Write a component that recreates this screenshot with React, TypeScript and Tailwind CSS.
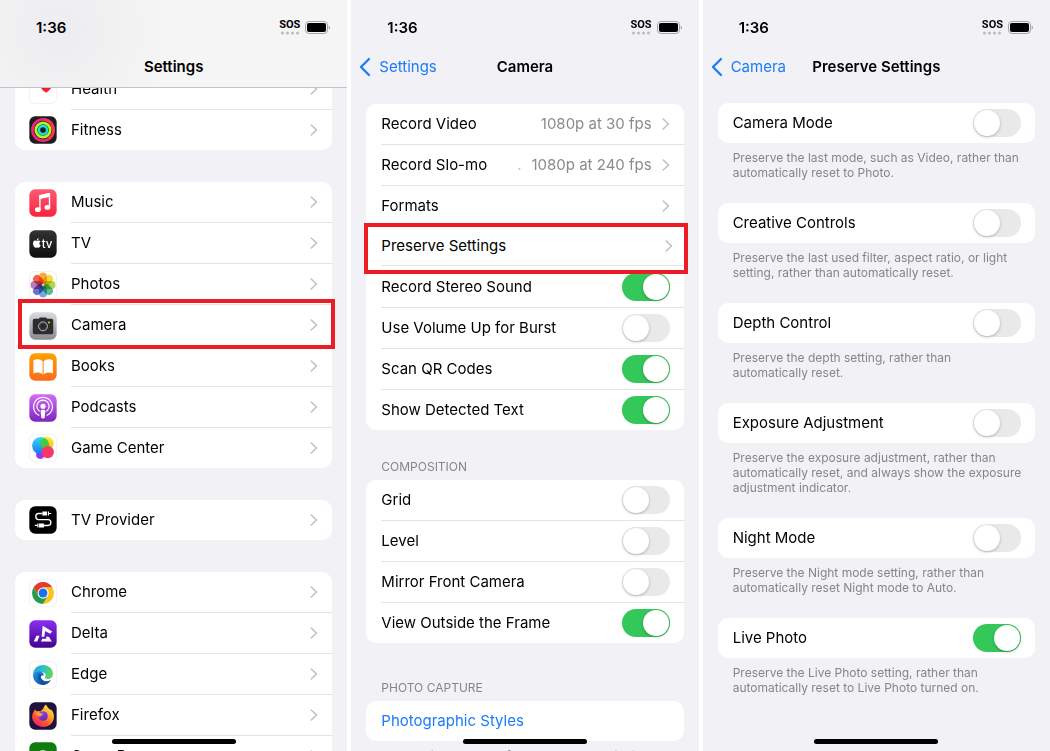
import { useId, type ReactNode } from "react";

/* ---------- app icons ---------- */

function Tile({ children, fill, outlined }: { children?: ReactNode; fill: string; outlined?: boolean }) {
  return (
    <svg viewBox="0 0 82 82" className="size-7 shrink-0" aria-hidden="true">
      <defs>
        <linearGradient id="g-music" x1="0" y1="0" x2="0" y2="1"><stop offset="0" stopColor="#fb5c74" /><stop offset="1" stopColor="#fa233b" /></linearGradient>
        <linearGradient id="g-tv" x1="0" y1="0" x2="0" y2="1"><stop offset="0" stopColor="#333333" /><stop offset="1" stopColor="#0f0f0f" /></linearGradient>
        <linearGradient id="g-camera" x1="0" y1="0" x2="0" y2="1"><stop offset="0" stopColor="#dcdbe0" /><stop offset="1" stopColor="#8b8a90" /></linearGradient>
        <linearGradient id="g-books" x1="0" y1="0" x2="0" y2="1"><stop offset="0" stopColor="#ffa000" /><stop offset="1" stopColor="#fb6a1e" /></linearGradient>
        <linearGradient id="g-podcasts" x1="0" y1="0" x2="0" y2="1"><stop offset="0" stopColor="#d36cf5" /><stop offset="1" stopColor="#7d27bd" /></linearGradient>
        <linearGradient id="g-delta" x1="0" y1="0" x2="0" y2="1"><stop offset="0" stopColor="#8b2cf5" /><stop offset="1" stopColor="#42078a" /></linearGradient>
      </defs>
      <rect x="1" y="1" width="80" height="80" rx="17" fill={fill} stroke={outlined ? "#e9e9eb" : "none"} strokeWidth="2" />
      {children}
    </svg>
  );
}

function HealthIcon() {
  return (
    <Tile fill="#fff" outlined>
      <path d="M50 49C40 42 33 35 33 27c0-10 13-13 17-4 4-9 17-6 17 4 0 8-7 15-17 22z" fill="#fb1d2e" />
    </Tile>
  );
}

function FitnessIcon() {
  return (
    <Tile fill="#1d1d1f">
      <circle cx="41" cy="41" r="31" fill="none" stroke="#f0227a" strokeWidth="8" />
      <path d="M46 10.400a31 31 0 0 1 12 56" fill="none" stroke="#f8384a" strokeWidth="8" />
      <circle cx="41" cy="41" r="21" fill="none" stroke="#b5f51c" strokeWidth="8" />
      <circle cx="41" cy="41" r="12" fill="none" stroke="#19e0e3" strokeWidth="7.500" />
    </Tile>
  );
}

function MusicIcon() {
  return (
    <Tile fill="url(#g-music)">
      <path d="M32 20l28-6v38" fill="none" stroke="#fff" strokeWidth="4" strokeLinejoin="round" />
      <path d="M30 19.500Q30 18 32 17.500L58 12q3-.5 3 2v9L30 30z" fill="#fff" />
      <path d="M32 20v40" stroke="#fff" strokeWidth="4" />
      <ellipse cx="26" cy="60.500" rx="8.500" ry="7" fill="#fff" />
      <ellipse cx="54" cy="54" rx="8.500" ry="7" fill="#fff" />
    </Tile>
  );
}

function TvIcon() {
  return (
    <Tile fill="url(#g-tv)">
      <path transform="translate(11 26) scale(1.04)" fill="#fff" d="M18.700 12.700c0-3.400 2.800-5 2.900-5.100-1.600-2.300-4-2.600-4.900-2.700-2.100-.2-4.100 1.200-5.100 1.200-1.100 0-2.700-1.200-4.400-1.200-2.300 0-4.400 1.300-5.500 3.400-2.400 4.100-.6 10.100 1.700 13.400 1.100 1.600 2.400 3.400 4.200 3.400 1.700-.1 2.300-1.100 4.400-1.100s2.600 1.100 4.400 1.100 3-1.600 4.100-3.300c1.300-1.900 1.800-3.700 1.800-3.800-.1 0-3.600-1.400-3.600-5.300zM15.300 2.700c.9-1.100 1.600-2.700 1.400-4.300-1.400.1-3 .9-4 2.100-.9 1-1.700 2.600-1.400 4.200 1.500.1 3.100-.8 4-2z" />
      <text x="37" y="53" fontSize="34" fontWeight="500" fontFamily="Inter, sans-serif" fill="#fff">tv</text>
    </Tile>
  );
}

const PETALS = ["#f9a02c", "#f2d81f", "#a9cf3c", "#4db77e", "#5aa5dd", "#5c63c0", "#b56bb5", "#f0523f"];

function PhotosIcon() {
  return (
    <Tile fill="#fff" outlined>
      {PETALS.map((color, i) => (
        <rect key={color} x="29.500" y="4.500" width="23" height="34" rx="11.500" fill={color} opacity="0.9" transform={`rotate(${i * 45} 41 41)`} className="mix-blend-multiply" />
      ))}
    </Tile>
  );
}

function CameraIcon() {
  return (
    <Tile fill="url(#g-camera)">
      <path d="M16 20h13l3-4h18l3 4h13q5 0 5 5v35q0 5-5 5H16q-5 0-5-5V25q0-5 5-5z" fill="#2d2d2f" />
      <circle cx="41" cy="42" r="13" fill="#27272a" stroke="#d4d4d8" strokeWidth="2.500" />
      <circle cx="41" cy="42" r="9" fill="none" stroke="#55555a" strokeWidth="1.500" />
      <circle cx="58.500" cy="31" r="3" fill="#f5c518" />
    </Tile>
  );
}

function BooksIcon() {
  return (
    <Tile fill="url(#g-books)">
      <path d="M40 24C34 17 20 16 13 22v38c8-4 20-4 27 3zM43 24c6-7 20-8 27-2v38c-8-4-20-4-27 3z" fill="#fff" />
      <path d="M41.500 25v35" stroke="#f9c191" strokeWidth="1.500" />
    </Tile>
  );
}

function PodcastsIcon() {
  return (
    <Tile fill="url(#g-podcasts)">
      <g fill="none" stroke="#fff" strokeWidth="3.500" strokeLinecap="round">
        <path d="M29 62a27.500 27.500 0 1 1 24 0" />
        <path d="M30 50a18 18 0 1 1 22 0" />
      </g>
      <circle cx="41" cy="36" r="7.500" fill="#fff" />
      <path d="M34 50q0-4 7-4t7 4l-2 18q-1 4-5 4t-5-4z" fill="#fff" />
    </Tile>
  );
}

function GameCenterIcon() {
  const id = useId();
  return (
    <Tile fill="#fff" outlined>
      <defs>
        <linearGradient id={`${id}a`} x1="0" y1="0" x2="0" y2="1"><stop offset="0" stopColor="#2fdcf5" /><stop offset="1" stopColor="#2272f2" /></linearGradient>
        <linearGradient id={`${id}b`} x1="0" y1="0" x2="0" y2="1"><stop offset="0" stopColor="#fff02a" /><stop offset="1" stopColor="#f7b718" /></linearGradient>
        <clipPath id={`${id}c`}><circle cx="34" cy="34" r="25" /></clipPath>
      </defs>
      <circle cx="33" cy="61" r="12" fill="#9438f2" />
      <circle cx="53" cy="27" r="19" fill={`url(#${id}b)`} />
      <circle cx="34" cy="34" r="25" fill={`url(#${id}a)`} />
      <circle cx="53" cy="27" r="19" fill="#3ecf3a" clipPath={`url(#${id}c)`} />
      <circle cx="55" cy="53" r="18" fill="#fb3668" />
    </Tile>
  );
}

function ProviderIcon() {
  return (
    <Tile fill="#000">
      <path d="M38 22H28q-8 0-8 9t8 9h28q8 0 8 8.500T56 57H44" fill="none" stroke="#fff" strokeWidth="4" />
      <path d="M39 16h14v12H39zM29 51h15v12H29z" fill="#fff" />
      <path d="M57 16v12M26 51v12" stroke="#fff" strokeWidth="3" />
      <path d="M57 22h8M17 57h9" stroke="#fff" strokeWidth="3.500" />
    </Tile>
  );
}

function ChromeIcon() {
  return (
    <Tile fill="#fff" outlined>
      <path d="M13.300 25a32 32 0 0 1 55.400 0H41l-13.900 24z" fill="#e33b2e" />
      <path d="M68.700 25A32 32 0 0 1 41 73l13.900-24a16 16 0 0 0 0-16L41 25z" fill="#fcc31e" />
      <path d="M13.300 25A32 32 0 0 0 41 73l13.900-24a16 16 0 0 1-27.800 0z" fill="#1f9d4d" />
      <circle cx="41" cy="41" r="16" fill="#fff" />
      <circle cx="41" cy="41" r="13" fill="#1a73e8" />
    </Tile>
  );
}

function DeltaIcon() {
  return (
    <Tile fill="url(#g-delta)">
      <path d="M40 17l28 17-6 6-15-8-2 17h-8z" fill="#fff" />
      <path d="M35 63l4-8h13l-3-6h9l9 14z" fill="#fff" />
      <path d="M22 46h9l-7 17h-10z" fill="#fff" />
    </Tile>
  );
}

function EdgeIcon() {
  const id = useId();
  return (
    <Tile fill="#fff" outlined>
      <defs>
        <linearGradient id={`${id}a`} x1="0" y1="0" x2="1" y2="0.300"><stop offset="0" stopColor="#1a9fe0" /><stop offset="0.500" stopColor="#2bbfd0" /><stop offset="1" stopColor="#5fd45a" /></linearGradient>
        <linearGradient id={`${id}b`} x1="0" y1="0" x2="1" y2="1"><stop offset="0" stopColor="#1c8fdc" /><stop offset="1" stopColor="#134f9f" /></linearGradient>
      </defs>
      <path d="M12 40C13 23 25 12 41 12c18 0 29 13 29 26 0 9-7 15-15 15-6 0-9-3-8-6 4-6 1-13-8-14-11-1-22 1-27 7z" fill={`url(#${id}a)`} />
      <path d="M12 40c3-7 13-12 24-8 6 2 9 7 6 11-5-2-8 1-7 6 2 9 17 15 29 7-5 9-14 14-23 14C24 70 11 57 12 40z" fill={`url(#${id}b)`} />
      <path d="M29 37c-6 10-2 24 10 33 10 1 20-5 25-14-9 6-20 4-26-2-5-5-5-10-2-14-2-2-5-3-7-3z" fill="#124a96" opacity="0.7" />
    </Tile>
  );
}

function FirefoxIcon() {
  const id = useId();
  return (
    <Tile fill="#20123a">
      <defs>
        <linearGradient id={`${id}a`} x1="0.900" y1="0" x2="0.200" y2="1"><stop offset="0" stopColor="#fff44f" /><stop offset="0.400" stopColor="#ffa62b" /><stop offset="0.700" stopColor="#ff4f3a" /><stop offset="1" stopColor="#f01a6b" /></linearGradient>
        <linearGradient id={`${id}b`} x1="0.300" y1="0" x2="0.700" y2="1"><stop offset="0" stopColor="#a03ff0" /><stop offset="1" stopColor="#5a2bb5" /></linearGradient>
      </defs>
      <path d="M18 21c1 2 3 5 5 6 4-1 8-1 11 1 2-4 4-6 7-7 1-5 4-10 9-14 2 7 7 10 12 16 0 0 2 0 3-1 7 8 9 17 8 24-2 16-15 27-31 27C24 73 10 60 9 44c0-9 4-15 9-23z" fill={`url(#${id}a)`} />
      <circle cx="41" cy="41" r="14" fill={`url(#${id}b)`} />
      <path d="M19 32c7-4 13-2 16 1l7 2c-1 4-9 4-9 8-6-1-11-5-14-11z" fill="#ff9a2b" />
    </Tile>
  );
}

function GamePassIcon() {
  return (
    <Tile fill="#107c10">
      <circle cx="41" cy="46" r="22" fill="#fff" />
    </Tile>
  );
}

/* ---------- shared pieces ---------- */

function Chevron() {
  return (
    <svg viewBox="0 0 8 12" className="h-3 w-2 shrink-0" aria-hidden="true">
      <path d="M1.200 1l5.300 5-5.300 5" fill="none" stroke="#c1c1c5" strokeWidth="1.600" strokeLinecap="round" strokeLinejoin="round" />
    </svg>
  );
}

function StatusBar() {
  return (
    <div className="flex h-[55px] items-center justify-between pl-9 pr-[17px]">
      <span className="text-[15px] font-semibold leading-5">1:36</span>
      <div className="flex items-center gap-[5px]">
        <div className="flex flex-col items-center">
          <span className="font-['Roboto','Liberation_Sans',sans-serif] text-[11px] font-bold leading-[10px]">SOS</span>
          <svg viewBox="0 0 20 4" className="mt-px h-1 w-5" aria-hidden="true">
            <g fill="#bdbdc1">
              <circle cx="2.500" cy="2" r="1.600" />
              <circle cx="7.500" cy="2" r="1.600" />
              <circle cx="12.500" cy="2" r="1.600" />
              <circle cx="17.500" cy="2" r="1.600" />
            </g>
          </svg>
        </div>
        <svg viewBox="0 0 25 13" className="h-[13px] w-[25px]" aria-hidden="true">
          <rect x="0.500" y="0.500" width="22" height="12" rx="3.500" fill="none" stroke="#a5a5a9" />
          <rect x="2" y="2" width="19" height="9" rx="2" fill="#000" />
          <path d="M23.700 4.500q1.300.5 1.300 2t-1.300 2z" fill="#a5a5a9" />
        </svg>
      </div>
    </div>
  );
}

function NavBar({ title, back }: { title: string; back?: string }) {
  return (
    <div className="grid h-8 grid-cols-[1fr_auto_1fr] items-start px-2 text-[15px] leading-6">
      <div>
        {back && (
          <a href="#back" className="flex items-center gap-2 text-[#1a7cf9]">
            <svg viewBox="0 0 12 20" className="h-5 w-3" aria-hidden="true">
              <path d="M10 2L2 10l8 8" fill="none" stroke="currentColor" strokeWidth="2.300" strokeLinecap="round" strokeLinejoin="round" />
            </svg>
            {back}
          </a>
        )}
      </div>
      <h1 className="font-semibold">{title}</h1>
    </div>
  );
}

function Phone({ children }: { children: ReactNode }) {
  return (
    <section className="relative h-full overflow-hidden bg-[#f2f1f6]">
      {children}
      <div className="absolute inset-x-0 bottom-[7px] flex justify-center">
        <div className="h-[5px] w-[124px] rounded-full bg-black" />
      </div>
    </section>
  );
}

function Toggle({ id, on }: { id: string; on?: boolean }) {
  return (
    <input
      id={id}
      type="checkbox"
      role="switch"
      defaultChecked={on}
      className="flex h-7 w-12 shrink-0 cursor-pointer appearance-none items-center rounded-full bg-[#e9e9ea] p-px before:size-[26px] before:rounded-full before:bg-white before:shadow-[0_1px_3px_rgba(0,0,0,0.25)] before:content-[''] checked:justify-end checked:bg-[#34c759]"
    />
  );
}

function Card({ children }: { children: ReactNode }) {
  return <div className="mx-[15px] rounded-[10px] bg-white">{children}</div>;
}

/* ---------- settings list ---------- */

function AppRow({ icon, name, highlighted }: { icon: ReactNode; name: string; highlighted?: boolean }) {
  return (
    <li className="group relative">
      <a href={`#${name}`} className="flex items-center gap-[14px] pl-[14px]">
        {icon}
        <span className="flex h-10 flex-1 items-center justify-between pr-[14px] group-not-last:h-[41px] group-not-last:border-b group-not-last:border-[#e4e4e6]">
          {name}
          <Chevron />
        </span>
      </a>
      {highlighted && <div className="pointer-events-none absolute -bottom-[3px] -right-[3px] -top-[6px] left-[3px] z-10 border-4 border-[#ed1c24]" />}
    </li>
  );
}

function AppGroup({ children }: { children: ReactNode }) {
  return (
    <Card>
      <ul>{children}</ul>
    </Card>
  );
}

function SettingsScreen() {
  return (
    <Phone>
      <header className="absolute inset-x-0 top-0 z-20 border-b border-[#c4c4c7] bg-[#f5f5f6] bg-[radial-gradient(circle_at_60px_30px,#ededef,#f5f5f6_110px)]">
        <StatusBar />
        <NavBar title="Settings" />
      </header>
      <div className="flex flex-col gap-8 pt-[69px]">
        <AppGroup>
          <AppRow icon={<HealthIcon />} name="Health" />
          <AppRow icon={<FitnessIcon />} name="Fitness" />
        </AppGroup>
        <AppGroup>
          <AppRow icon={<MusicIcon />} name="Music" />
          <AppRow icon={<TvIcon />} name="TV" />
          <AppRow icon={<PhotosIcon />} name="Photos" />
          <AppRow icon={<CameraIcon />} name="Camera" highlighted />
          <AppRow icon={<BooksIcon />} name="Books" />
          <AppRow icon={<PodcastsIcon />} name="Podcasts" />
          <AppRow icon={<GameCenterIcon />} name="Game Center" />
        </AppGroup>
        <AppGroup>
          <AppRow icon={<ProviderIcon />} name="TV Provider" />
        </AppGroup>
        <AppGroup>
          <AppRow icon={<ChromeIcon />} name="Chrome" />
          <AppRow icon={<DeltaIcon />} name="Delta" />
          <AppRow icon={<EdgeIcon />} name="Edge" />
          <AppRow icon={<FirefoxIcon />} name="Firefox" />
          <AppRow icon={<GamePassIcon />} name="Game Pass" />
        </AppGroup>
      </div>
    </Phone>
  );
}

/* ---------- camera settings ---------- */

function LinkRow({ name, value, marker, last }: { name: string; value?: string; marker?: string; last?: boolean }) {
  return (
    <a href={`#${name}`} className={last ? "ml-[15px] flex h-10 items-center pr-[14px]" : "ml-[15px] flex h-[41px] items-center border-b border-[#e4e4e6] pr-[14px]"}>
      <span className="flex-1">{name}</span>
      {marker && <span className="mr-[10px] text-[#c7c7cb]">{marker}</span>}
      {value && <span className="mr-[10px] text-[#8a8a8e]">{value}</span>}
      <Chevron />
    </a>
  );
}

function ToggleRow({ id, name, on, last }: { id: string; name: string; on?: boolean; last?: boolean }) {
  return (
    <div className={last ? "ml-[15px] flex h-10 items-center justify-between pr-[14px]" : "ml-[15px] flex h-[41px] items-center justify-between border-b border-[#e4e4e6] pr-[14px]"}>
      <label htmlFor={id}>{name}</label>
      <Toggle id={id} on={on} />
    </div>
  );
}

function SectionLabel({ children }: { children: ReactNode }) {
  return <h2 className="mb-[6px] ml-[30px] text-[12px] leading-[14px] text-[#85858a]">{children}</h2>;
}

function CameraScreen() {
  return (
    <Phone>
      <header>
        <StatusBar />
        <NavBar title="Camera" back="Settings" />
      </header>
      <main className="pt-[17px]">
        <Card>
          <LinkRow name="Record Video" value="1080p at 30 fps" />
          <LinkRow name="Record Slo-mo" value="1080p at 240 fps" marker="." />
          <LinkRow name="Formats" last />
          <div className="relative h-[41px]">
            <div className="absolute -left-[2px] -right-[4px] -top-[3px] z-10 h-[51px] border-4 border-[#ed1c24] bg-white">
              <a href="#preserve" className="ml-[13px] flex h-[39px] items-center justify-between border-b border-[#e4e4e6] pr-[11px]">
                Preserve Settings
                <Chevron />
              </a>
            </div>
          </div>
          <ToggleRow id="stereo" name="Record Stereo Sound" on />
          <ToggleRow id="burst" name="Use Volume Up for Burst" />
          <ToggleRow id="qr" name="Scan QR Codes" on />
          <ToggleRow id="text" name="Show Detected Text" on last />
        </Card>
        <div className="pt-[30px]">
          <SectionLabel>COMPOSITION</SectionLabel>
          <Card>
            <ToggleRow id="grid" name="Grid" />
            <ToggleRow id="level" name="Level" />
            <ToggleRow id="mirror" name="Mirror Front Camera" />
            <ToggleRow id="outside" name="View Outside the Frame" on last />
          </Card>
        </div>
        <div className="pt-[38px]">
          <SectionLabel>PHOTO CAPTURE</SectionLabel>
          <Card>
            <a href="#styles" className="flex h-10 items-center pl-[15px] text-[#1a7cf9]">Photographic Styles</a>
          </Card>
          <p className="mx-[30px] pt-[7px] text-[12px] leading-[15px] text-[#85858a]">
            Personalize the look of your photos by bringing your preferences into the capture.
          </p>
        </div>
      </main>
    </Phone>
  );
}

/* ---------- preserve settings ---------- */

const PRESERVE = [
  { id: "mode", name: "Camera Mode", lines: ["Preserve the last mode, such as Video, rather than", "automatically reset to Photo."] },
  { id: "creative", name: "Creative Controls", lines: ["Preserve the last used filter, aspect ratio, or light", "setting, rather than automatically reset."] },
  { id: "depth", name: "Depth Control", lines: ["Preserve the depth setting, rather than", "automatically reset."] },
  { id: "exposure", name: "Exposure Adjustment", lines: ["Preserve the exposure adjustment, rather than", "automatically reset, and always show the exposure", "adjustment indicator."] },
  { id: "night", name: "Night Mode", lines: ["Preserve the Night mode setting, rather than", "automatically reset Night mode to Auto."] },
  { id: "live", name: "Live Photo", on: true, lines: ["Preserve the Live Photo setting, rather than", "automatically reset to Live Photo turned on."] },
];

function PreserveScreen() {
  return (
    <Phone>
      <header>
        <StatusBar />
        <NavBar title="Preserve Settings" back="Camera" />
      </header>
      <main className="flex flex-col gap-[23px] pt-4">
        {PRESERVE.map(({ id, name, on, lines }) => (
          <div key={id}>
            <Card>
              <ToggleRow id={id} name={name} on={on} last />
            </Card>
            <p className="ml-[30px] pt-[7px] text-[12px] leading-[15px] text-[#85858a]">
              {lines.map((line) => (
                <span key={line} className="block whitespace-nowrap">{line}</span>
              ))}
            </p>
          </div>
        ))}
      </main>
    </Phone>
  );
}

export default function App() {
  return (
    <div className="grid h-screen grid-cols-3 gap-1 overflow-hidden bg-white font-['Inter','Liberation_Sans',sans-serif] text-[15px] text-black">
      <SettingsScreen />
      <CameraScreen />
      <PreserveScreen />
    </div>
  );
}
